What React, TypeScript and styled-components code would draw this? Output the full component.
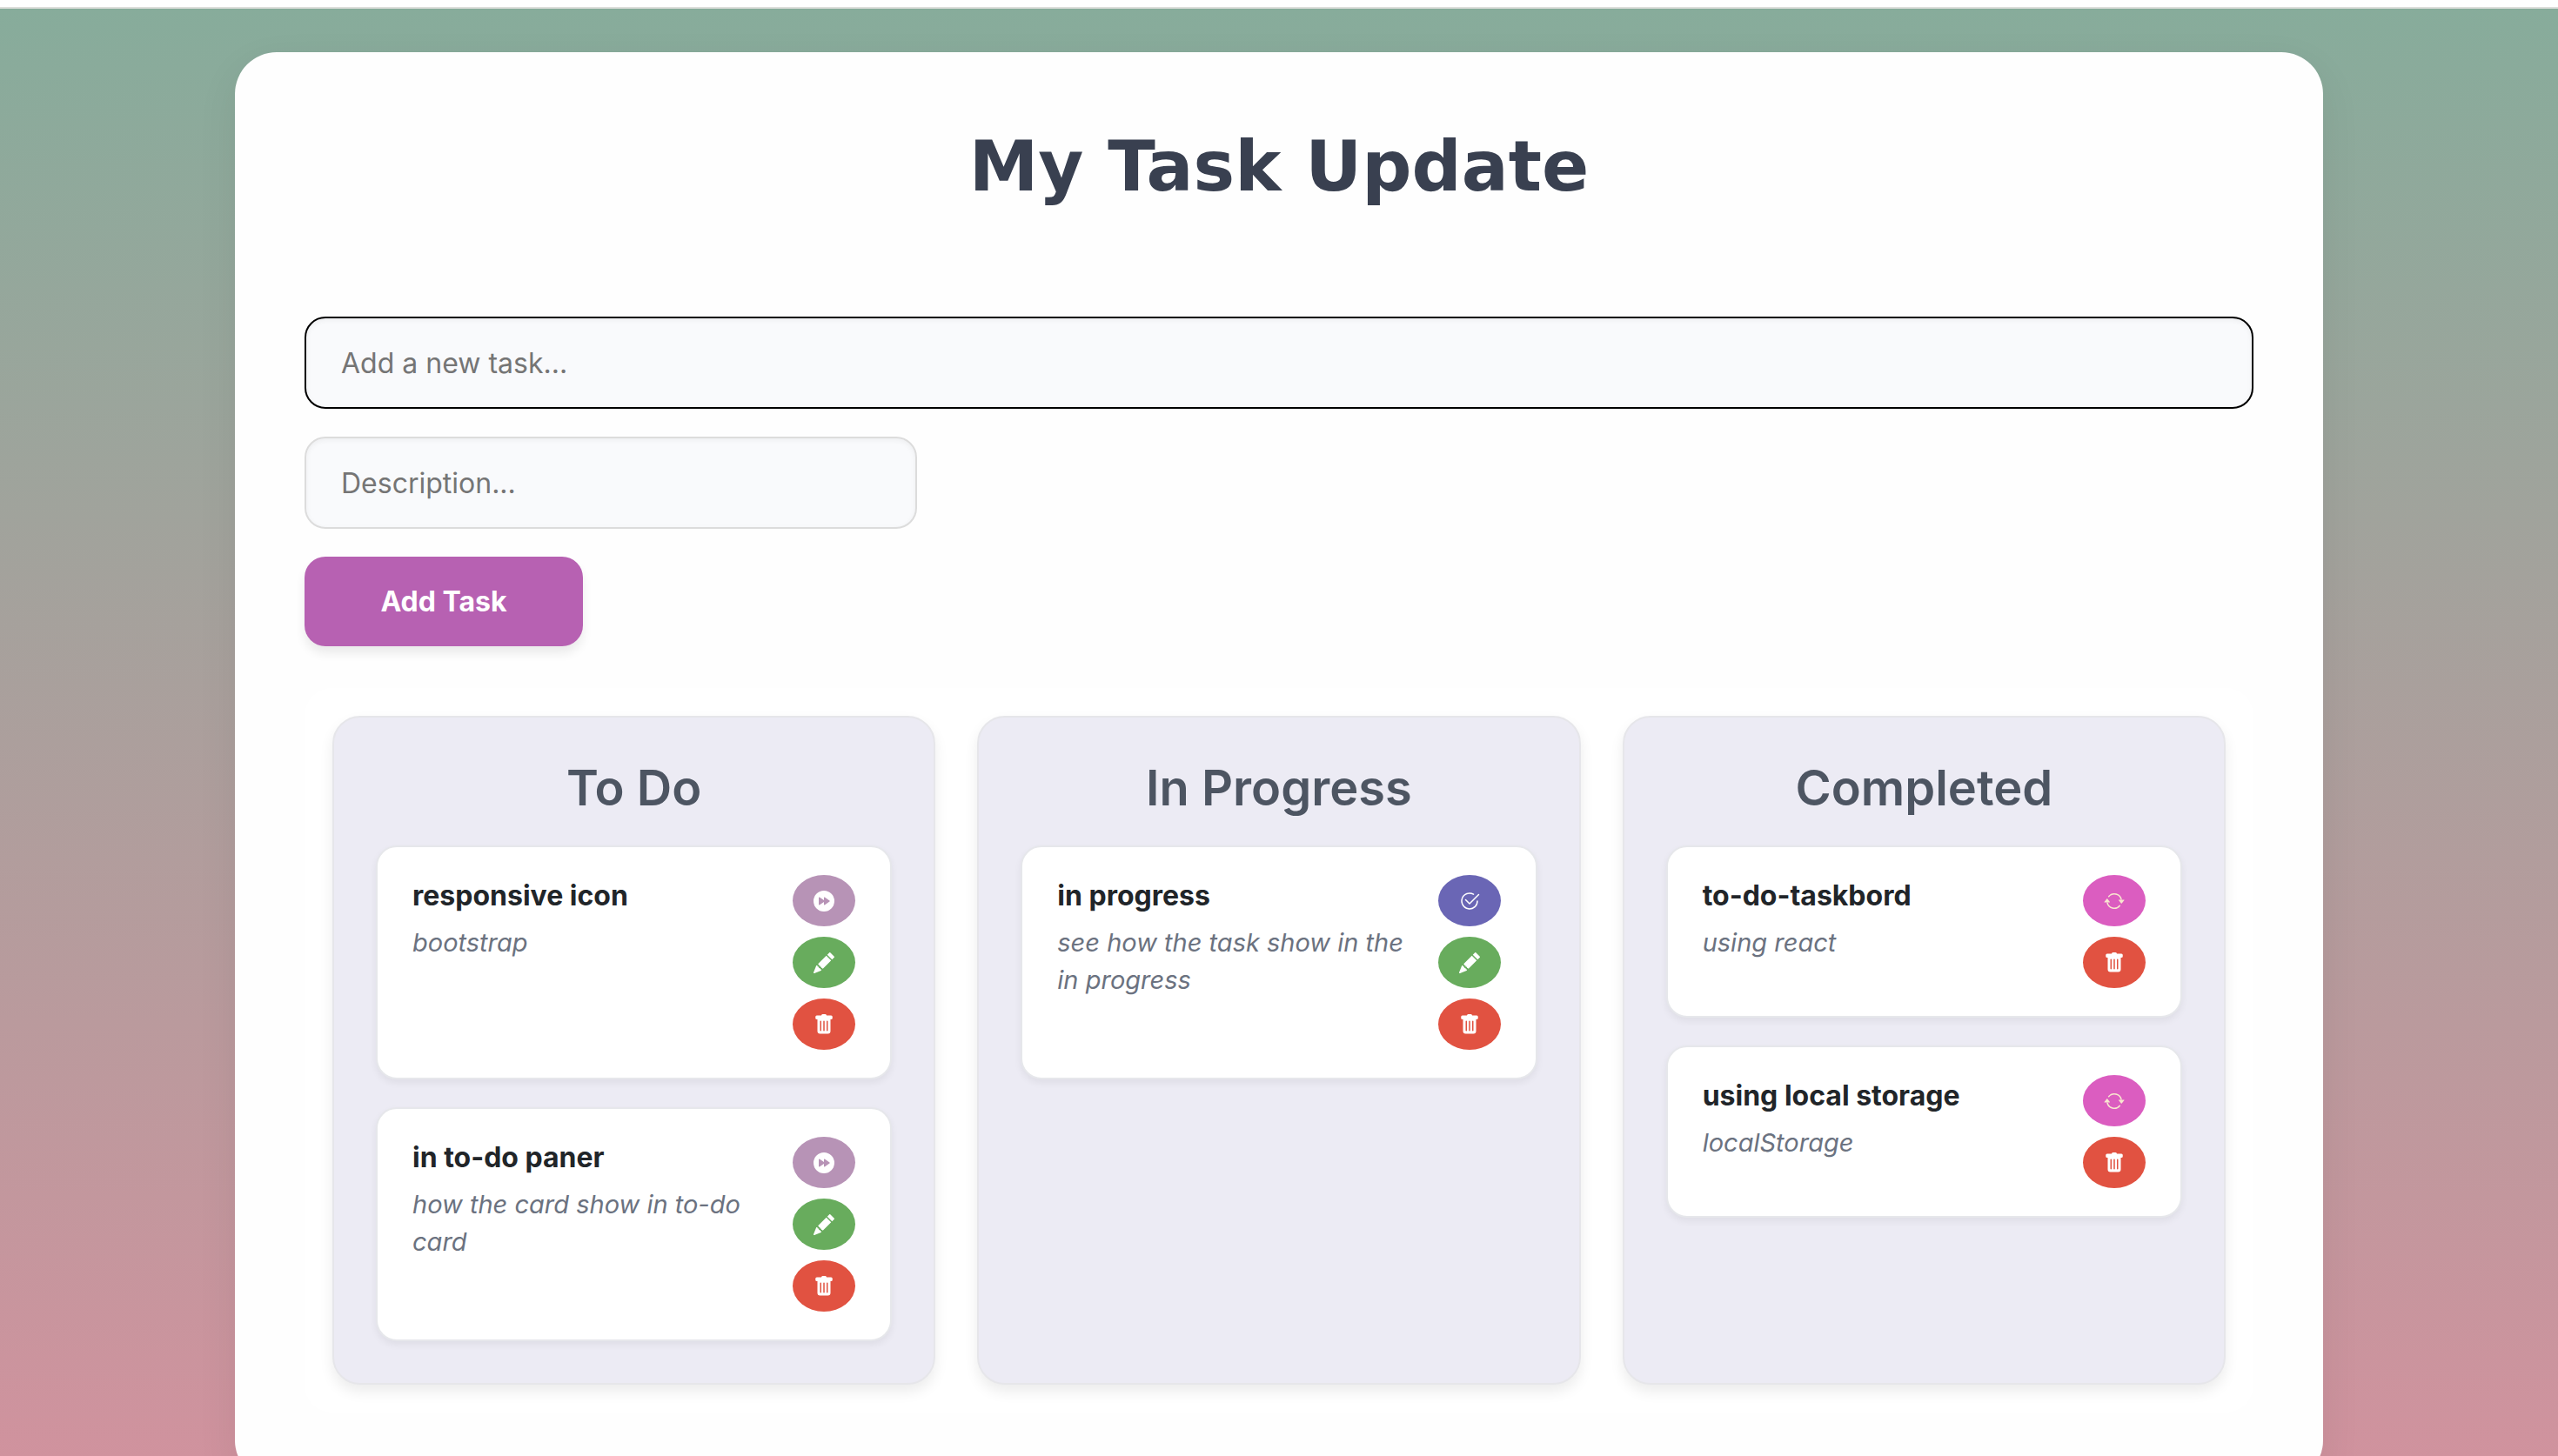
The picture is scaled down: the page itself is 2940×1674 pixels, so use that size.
import React from "react";
import styled, { createGlobalStyle } from "styled-components";
import {
  BsArrowRepeat,
  BsCheck2Circle,
  BsFastForwardCircleFill,
  BsPencilFill,
  BsTrashFill,
} from "react-icons/bs";

const GlobalStyle = createGlobalStyle`
  *, *::before, *::after { box-sizing: border-box; }
  body {
    margin: 0;
    font-family: Inter, "Noto Sans", sans-serif;
    font-size: 32px;
    line-height: 48px;
    color: #212529;
  }
  h1, h2, h3, p { margin: 0; }
  button, input { font: inherit; }
`;

const TopBar = styled.div`
  height: 10px;
  background: #ffffff;
  border-bottom: 2px solid #dddedb;
`;

const Page = styled.div`
  display: flex;
  justify-content: center;
  padding: 50px 60px 60px;
  background: linear-gradient(to bottom, #87ac9b, #d4919e);
`;

const Panel = styled.main`
  width: 100%;
  max-width: 2400px;
  padding: 80px;
  border-radius: 48px;
  background: #fefefe;
  box-shadow: 0 16px 48px rgba(0, 0, 0, 0.07);
`;

const Title = styled.h1`
  margin-bottom: 120px;
  font-family: Verdana, "DejaVu Sans", sans-serif;
  font-size: 80px;
  font-weight: 700;
  line-height: 104px;
  text-align: center;
  color: #394050;
`;

const Form = styled.form`
  display: flex;
  flex-direction: column;
  align-items: flex-start;
  gap: 32px;
  margin-bottom: 48px;
`;

const Field = styled.input<{ $wide?: boolean }>`
  width: ${(p) => (p.$wide ? "100%" : "704px")};
  height: 106px;
  padding: 0 40px;
  border: 2px solid ${(p) => (p.$wide ? "#000000" : "#dcdcdc")};
  border-radius: 24px;
  outline: none;
  background: #f9fafc;
  box-shadow: inset 0 2px 6px rgba(0, 0, 0, 0.05);
  color: #212529;

  &::placeholder {
    color: #757575;
    opacity: 1;
  }
`;

const SubmitButton = styled.button`
  width: 320px;
  height: 103px;
  border: 0;
  border-radius: 24px;
  background: #b761b2;
  box-shadow: 0 8px 12px rgba(0, 0, 0, 0.08);
  color: #ffffff;
  font-weight: 700;
  cursor: pointer;
`;

const Board = styled.div`
  display: grid;
  grid-template-columns: repeat(3, minmax(0, 1fr));
  gap: 48px;
  padding: 32px;
  border-radius: 32px;
  background: #ffffff;
`;

const Column = styled.section`
  padding: 48px;
  border: 2px solid #e6e6ea;
  border-radius: 32px;
  background: #ecebf4;
  box-shadow: 0 8px 16px rgba(0, 0, 0, 0.08);
`;

const ColumnTitle = styled.h2`
  margin-bottom: 32px;
  font-size: 56px;
  font-weight: 600;
  line-height: 67px;
  text-align: center;
  color: #4d5562;
`;

const CardList = styled.div`
  display: flex;
  flex-direction: column;
  gap: 32px;
`;

const Card = styled.article`
  display: flex;
  justify-content: space-between;
  gap: 24px;
  padding: 32px 40px;
  border: 2px solid #e6e7eb;
  border-radius: 24px;
  background: #ffffff;
  box-shadow: 0 4px 8px rgba(0, 0, 0, 0.06);
`;

const CardText = styled.div`
  flex: 1;
  min-width: 0;
`;

const CardTitle = styled.h3`
  margin-bottom: 8px;
  font-size: 32px;
  font-weight: 700;
  line-height: 48px;
`;

const CardNote = styled.p`
  font-size: 29px;
  font-style: italic;
  line-height: 43px;
  color: #6b7280;
`;

const Actions = styled.div`
  display: flex;
  flex-direction: column;
  gap: 12px;
`;

const ActionButton = styled.button<{ $bg: string; $fg?: string }>`
  display: flex;
  align-items: center;
  justify-content: center;
  width: 72px;
  height: 59px;
  padding: 0;
  border: 0;
  border-radius: 50%;
  background: ${(p) => p.$bg};
  color: ${(p) => p.$fg ?? "#ffffff"};
  font-size: 24px;
  cursor: pointer;
`;

const actions = {
  advance: { label: "Start", bg: "#b793b6", fg: "#ffffff", Icon: BsFastForwardCircleFill },
  complete: { label: "Complete", bg: "#6a66b5", fg: "#ffffff", Icon: BsCheck2Circle },
  restart: { label: "Restart", bg: "#db5dc0", fg: "#f8e6cf", Icon: BsArrowRepeat },
  edit: { label: "Edit", bg: "#68ac5d", fg: "#ffffff", Icon: BsPencilFill },
  remove: { label: "Delete", bg: "#e15241", fg: "#ffffff", Icon: BsTrashFill },
};

type ActionName = keyof typeof actions;

interface Task {
  title: string;
  note: string;
}

interface ColumnData {
  title: string;
  actions: ActionName[];
  tasks: Task[];
}

const columns: ColumnData[] = [
  {
    title: "To Do",
    actions: ["advance", "edit", "remove"],
    tasks: [
      { title: "responsive icon", note: "bootstrap" },
      { title: "in to-do paner", note: "how the card show in to-do card" },
    ],
  },
  {
    title: "In Progress",
    actions: ["complete", "edit", "remove"],
    tasks: [{ title: "in progress", note: "see how the task show in the in progress" }],
  },
  {
    title: "Completed",
    actions: ["restart", "remove"],
    tasks: [
      { title: "to-do-taskbord", note: "using react" },
      { title: "using local storage", note: "localStorage" },
    ],
  },
];

function TaskCard({ task, names }: { task: Task; names: ActionName[] }) {
  return (
    <Card>
      <CardText>
        <CardTitle>{task.title}</CardTitle>
        <CardNote>{task.note}</CardNote>
      </CardText>
      <Actions>
        {names.map((name) => {
          const { label, bg, fg, Icon } = actions[name];
          return (
            <ActionButton key={name} type="button" aria-label={label} $bg={bg} $fg={fg}>
              <Icon />
            </ActionButton>
          );
        })}
      </Actions>
    </Card>
  );
}

export default function App() {
  return (
    <>
      <GlobalStyle />
      <TopBar />
      <Page>
        <Panel>
          <Title>My Task Update</Title>
          <Form onSubmit={(e) => e.preventDefault()}>
            <Field $wide type="text" aria-label="Task" placeholder="Add a new task..." />
            <Field type="text" aria-label="Description" placeholder="Description..." />
            <SubmitButton type="submit">Add Task</SubmitButton>
          </Form>
          <Board>
            {columns.map((column) => (
              <Column key={column.title}>
                <ColumnTitle>{column.title}</ColumnTitle>
                <CardList>
                  {column.tasks.map((task) => (
                    <TaskCard key={task.title} task={task} names={column.actions} />
                  ))}
                </CardList>
              </Column>
            ))}
          </Board>
        </Panel>
      </Page>
    </>
  );
}
